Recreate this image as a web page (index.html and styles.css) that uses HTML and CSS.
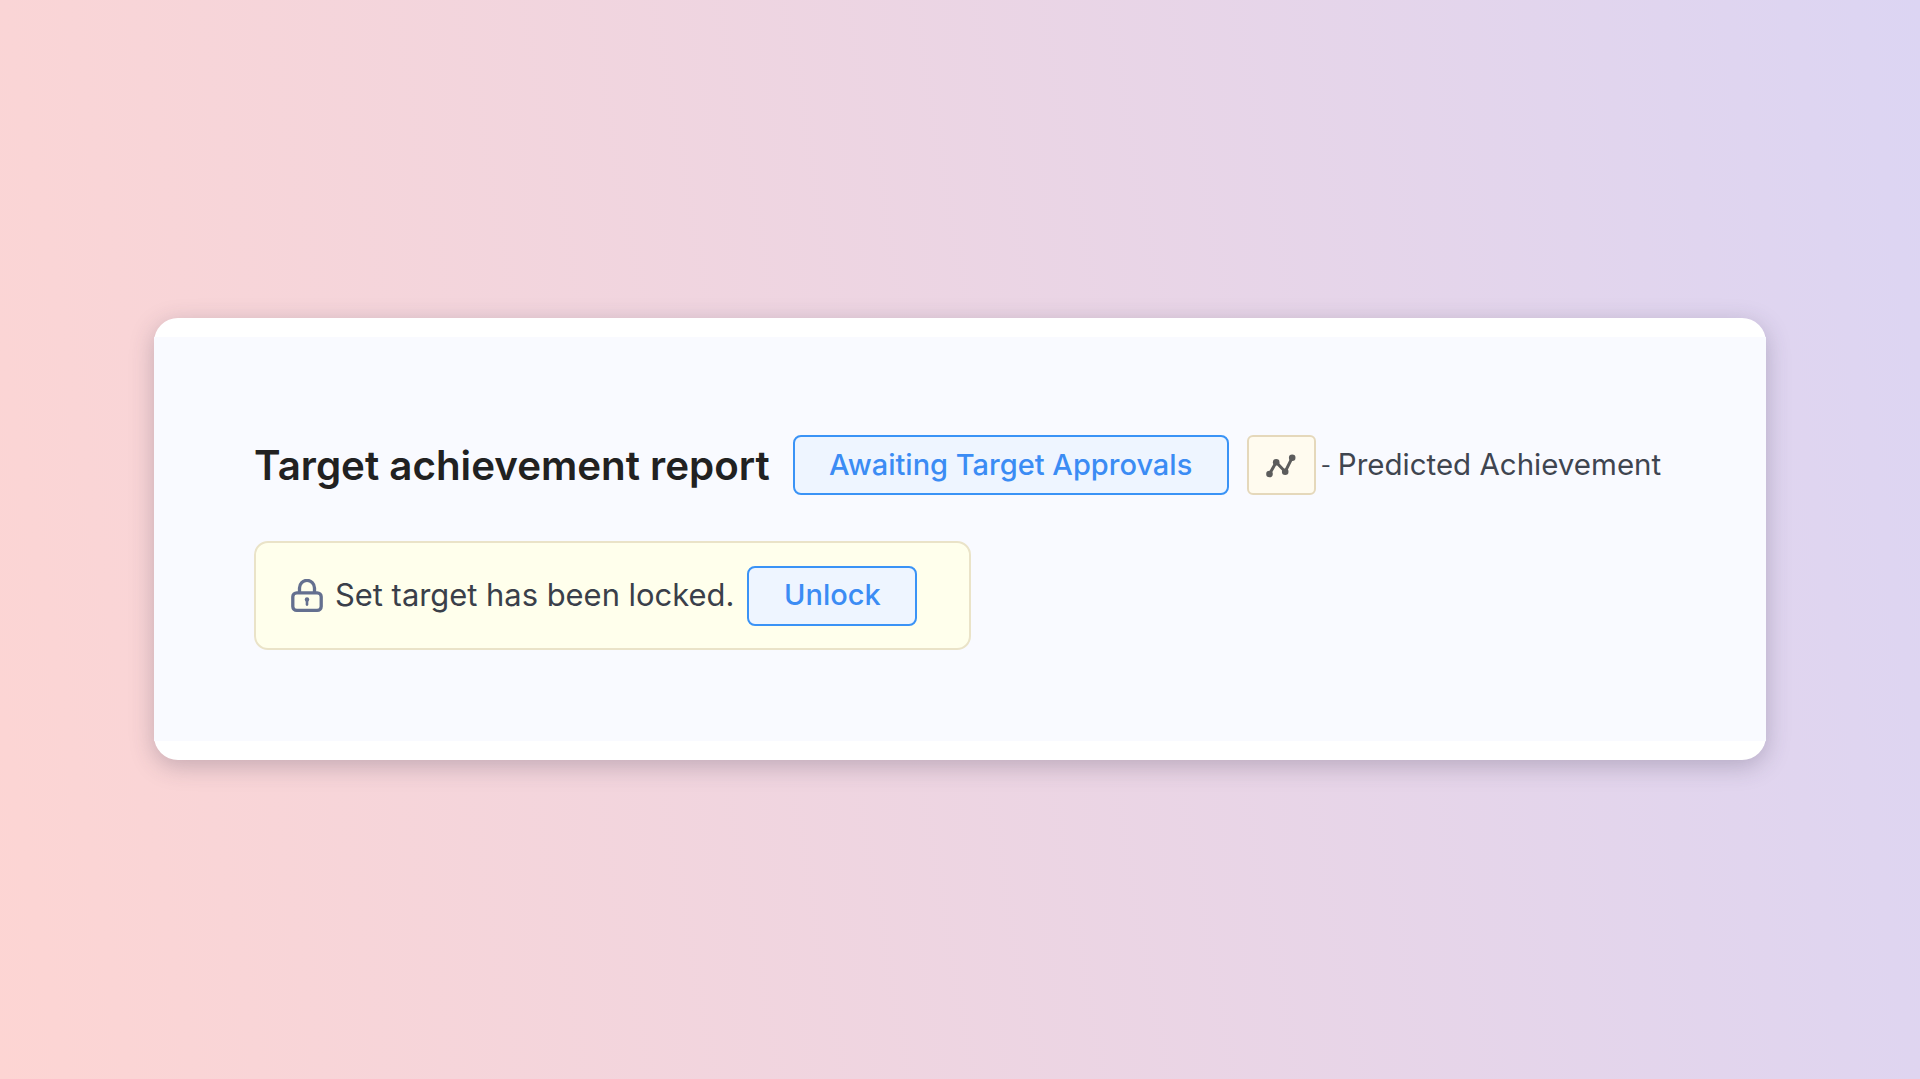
FILE: index.html
```html
<!DOCTYPE html>
<html lang="en">
<head>
<meta charset="utf-8">
<title>Target achievement report</title>
<link rel="stylesheet" href="styles.css">
</head>
<body>
<main class="card">
  <div class="card-inner">
    <div class="header-row">
      <h1 class="title">Target achievement report</h1>
      <span class="status-badge"><span class="nudge">Awaiting Target Approvals</span></span>
      <span class="legend-icon">
        <svg class="trend-svg" viewBox="0 0 32 28" aria-hidden="true">
          <path class="trend-line" d="M4.5 23 L11.2 11.3 L20.2 20.7 L27.2 6.7"/>
          <circle class="trend-dot" cx="4.5" cy="23" r="3.3"/>
          <circle class="trend-dot" cx="11.2" cy="11.3" r="3.3"/>
          <circle class="trend-dot" cx="20.2" cy="20.7" r="3.3"/>
          <circle class="trend-dot" cx="27.2" cy="6.7" r="3.3"/>
        </svg>
      </span>
      <span class="legend-text"><span class="legend-dash">-</span>Predicted Achievement</span>
    </div>
    <div class="notice">
      <svg class="lock-svg" viewBox="0 0 32 34" aria-hidden="true">
        <path class="lock-stroke" d="M8.5 13.8 V8.9 A7.5 7.5 0 0 1 23.5 8.9 V13.8"/>
        <rect class="lock-stroke" x="1.8" y="13.8" width="28.4" height="17.6" rx="4"/>
        <circle class="lock-key" cx="16" cy="20.4" r="2.2"/>
        <path class="lock-hole" d="M16 20.4 V25.6"/>
      </svg>
      <span class="notice-text">Set target has been locked.</span>
      <button class="unlock-btn" type="button"><span class="nudge">Unlock</span></button>
    </div>
  </div>
</main>
</body>
</html>
```
FILE: styles.css
```css
* { box-sizing: border-box; }
html, body { height: 100%; }
body {
  margin: 0;
  padding-bottom: 1px;
  display: flex;
  align-items: center;
  justify-content: center;
  background: linear-gradient(80deg, #fdd5d3 0%, #dcd5f3 100%);
  font-family: Inter, "Noto Sans", sans-serif;
}
.card {
  width: 1612px;
  height: 442px;
  background: #fff;
  border-radius: 24px;
  padding: 19px 0;
  box-shadow: 0 6px 24px rgba(60, 55, 80, 0.28);
}
.card-inner {
  height: 100%;
  background: #f9faff;
  padding: 98px 100px 0;
}
.header-row {
  display: flex;
  align-items: center;
  height: 60px;
}
.title {
  margin: 0 23px 0 0;
  font-size: 40.3px;
  font-weight: 600;
  color: #212121;
  white-space: nowrap;
}
.nudge { display: block; padding-bottom: 2px; }
.status-badge {
  width: 436px;
  height: 60px;
  display: flex;
  align-items: center;
  justify-content: center;
  margin-right: 18px;
  border: 2px solid #3a93f6;
  border-radius: 8px;
  background: #eef5ff;
  color: #3b8cf4;
  font-size: 29px;
  font-weight: 500;
  white-space: nowrap;
}
.legend-icon {
  width: 69px;
  height: 60px;
  display: flex;
  align-items: center;
  justify-content: center;
  margin-right: 5px;
  border: 2px solid #e5d8bb;
  border-radius: 6px;
  background: #fffbef;
}
.trend-svg { width: 32px; height: 28px; }
.trend-line { fill: none; stroke: #5c5c5c; stroke-width: 3; }
.trend-dot { fill: #5c5c5c; }
.legend-text {
  padding-bottom: 2px;
  font-size: 29.5px;
  color: #3f4550;
  white-space: nowrap;
}
.legend-dash {
  display: inline-block;
  margin-right: 7px;
  font-size: 22px;
  vertical-align: 2px;
}
.notice {
  width: 717px;
  height: 109px;
  margin-top: 46px;
  padding-left: 35px;
  display: flex;
  align-items: center;
  border: 2px solid #eae3c8;
  border-radius: 14px;
  background: #ffffec;
}
.lock-svg { width: 32px; height: 34px; flex: none; margin-right: 12px; }
.lock-stroke { fill: none; stroke: #64708f; stroke-width: 3.3; }
.lock-key { fill: #64708f; }
.lock-hole { stroke: #64708f; stroke-width: 2.6; stroke-linecap: round; }
.notice-text {
  padding-bottom: 2px;
  font-size: 30.9px;
  color: #3a3f4a;
  white-space: nowrap;
}
.unlock-btn {
  width: 170px;
  height: 60px;
  margin-left: 13px;
  padding: 0;
  border: 2px solid #3a93f6;
  border-radius: 8px;
  background: #eef5ff;
  color: #3b8cf4;
  font-family: inherit;
  font-size: 29px;
  font-weight: 500;
}
```
